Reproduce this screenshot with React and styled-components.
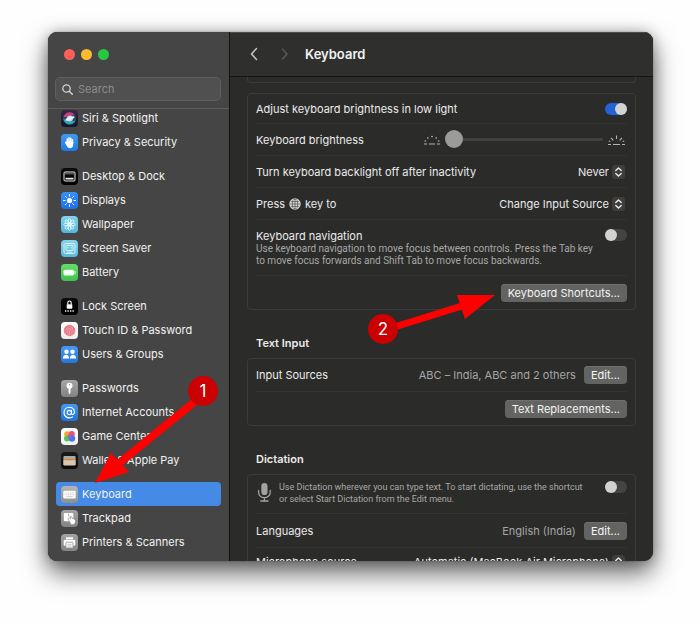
import React, { useState } from "react";
import styled, { createGlobalStyle } from "styled-components";

const GlobalStyle = createGlobalStyle`
  * {
    box-sizing: border-box;
  }
  body {
    margin: 0;
    background: #fefefe;
    color: #ececeb;
    font-family: Inter, "Liberation Sans", sans-serif;
    font-size: 11px;
    font-weight: 400;
    line-height: 14px;
  }
  h1, h2, p {
    margin: 0;
  }
  button, input, select {
    margin: 0;
    padding: 0;
    border: 0;
    font: inherit;
    color: inherit;
  }
`;

const Page = styled.main`
  height: 100vh;
  min-height: 300px;
  padding: 32px 47px 63px 48px;
`;

const Window = styled.div`
  position: relative;
  display: flex;
  height: 100%;
  border-radius: 9px;
  background: #2b2b2a;
  box-shadow: 0 0 1px rgba(0, 0, 0, 0.6), 0 0 14px rgba(0, 0, 0, 0.25),
    0 12px 26px rgba(0, 0, 0, 0.6);
`;

const Sidebar = styled.aside`
  display: flex;
  flex-direction: column;
  flex: 0 0 182px;
  border-right: 1px solid #121212;
  border-radius: 9px 0 0 9px;
  background: #454545;
  overflow: hidden;
`;

const TrafficLights = styled.div`
  display: flex;
  gap: 6px;
  padding: 17px 16px;
`;

const Light = styled.button`
  width: 11px;
  height: 11px;
  border-radius: 50%;
  background: ${({ $color }) => $color};
`;

const SearchBox = styled.label`
  display: flex;
  align-items: center;
  gap: 5px;
  height: 24px;
  margin: 0 8px 7px 7px;
  padding: 0 6px;
  border: 1px solid #5f5f5f;
  border-radius: 5px;
  background: #505050;
  svg {
    flex: none;
  }
  input {
    width: 100%;
    min-width: 0;
    background: none;
    outline: none;
    &::placeholder {
      color: #8c8c8c;
      opacity: 1;
    }
  }
`;

const MenuScroll = styled.nav`
  flex: 1;
  min-height: 0;
  border-top: 1px solid #5c5c5c;
  overflow: hidden;
`;

const MenuGroup = styled.ul`
  margin: -3px 8px 13px;
  padding: 0;
  list-style: none;
`;

const MenuItem = styled.a`
  display: flex;
  align-items: center;
  gap: 4px;
  height: 24px;
  padding: 0 5px;
  border-radius: 4px;
  background: ${({ $active }) => ($active ? "#448ae6" : "none")};
  color: #f2f2f2;
  text-decoration: none;
  white-space: nowrap;
  svg {
    flex: none;
  }
`;

const Pane = styled.section`
  display: flex;
  flex-direction: column;
  flex: 1;
  min-width: 0;
  border-radius: 0 9px 9px 0;
  overflow: hidden;
`;

const TitleBar = styled.header`
  display: flex;
  align-items: center;
  flex: 0 0 45px;
  padding: 0 18px 2px;
  border-top: 1px solid #4c4c4b;
  border-bottom: 1px solid #151514;
  background: #2f2f2e;
  h1 {
    font-size: 13px;
    font-weight: 600;
    line-height: 16px;
    color: #f2f2f2;
  }
`;

const NavButton = styled.button`
  width: 13px;
  height: 16px;
  margin-right: ${({ disabled }) => (disabled ? "14px" : "17px")};
  background: none;
  color: ${({ disabled }) => (disabled ? "#5a5a59" : "#c4c4c3")};
  svg {
    display: block;
  }
`;

const PaneScroll = styled.div`
  flex: 1;
  min-height: 0;
  padding: 0 17px;
  overflow: hidden;
`;

const CardTail = styled.div`
  height: 6px;
  margin-bottom: 10px;
  border: 1px solid #3b3b3a;
  border-top: 0;
  border-radius: 0 0 4px 4px;
`;

const Card = styled.div`
  padding: 0 8px;
  border: 1px solid #3b3b3a;
  border-radius: 4px;
  background: #2b2b2a;
`;

const rowHeights = {
  short: "29px",
  normal: "32px",
  tall: "34px",
};

const Row = styled.div`
  display: flex;
  align-items: center;
  justify-content: space-between;
  gap: 4px;
  min-height: ${({ $size = "normal" }) => rowHeights[$size]};
  white-space: nowrap;
  & + & {
    border-top: 1px solid #333332;
  }
`;

const TextRow = styled(Row)`
  align-items: flex-start;
  padding: ${({ $compact }) => ($compact ? "6px 0 8px" : "9px 0 8px")};
`;

const RowTitle = styled.label`
  display: flex;
  align-items: center;
  gap: 4px;
`;

const Note = styled.p`
  font-family: Roboto, Inter, sans-serif;
  font-size: ${({ $small }) => ($small ? "9px" : "10px")};
  line-height: 12px;
  color: #a8a8a7;
`;

const DictationInfo = styled.div`
  display: flex;
  gap: 6px;
  svg {
    flex: none;
  }
`;

const SectionTitle = styled.h2`
  padding: 26px 9px 8px;
  font-size: 11px;
  font-weight: 600;
  line-height: 14px;
`;

const Controls = styled.div`
  display: flex;
  align-items: center;
  gap: 8px;
`;

const Value = styled.span`
  color: #a6a6a5;
`;

const PushButton = styled.button`
  height: 18px;
  padding: 0 7px;
  border-radius: 4px;
  background: #636362;
  color: #f4f4f3;
  box-shadow: inset 0 1px 0 #6f6f6e;
`;

const Switch = styled.input`
  flex: none;
  width: 22px;
  height: 12px;
  border-radius: 6px;
  appearance: none;
  background: #444443;
  &::before {
    content: "";
    display: block;
    width: 12px;
    height: 12px;
    border-radius: 50%;
    background: #d2d2d1;
  }
  &:checked {
    background: #2562d6;
  }
  &:checked::before {
    margin-left: auto;
  }
`;

const Picker = styled.div`
  display: flex;
  align-items: center;
  gap: 3px;
  padding-right: 2px;
  select {
    appearance: none;
    background: transparent;
    text-align-last: right;
    outline: none;
  }
`;

const SliderBox = styled.div`
  display: flex;
  align-items: center;
  gap: 4px;
  flex: 0 0 204px;
  svg {
    flex: none;
  }
`;

const Slider = styled.input`
  flex: 1;
  min-width: 0;
  height: 18px;
  appearance: none;
  background: none;
  &::-webkit-slider-runnable-track {
    height: 3px;
    border-radius: 2px;
    background: #414140;
  }
  &::-webkit-slider-thumb {
    appearance: none;
    width: 18px;
    height: 18px;
    margin-top: -8px;
    border-radius: 50%;
    background: #9b9b9a;
  }
`;

const Arrows = styled.svg`
  position: absolute;
  top: 0;
  left: 0;
  pointer-events: none;
`;

const Badge = styled.span`
  position: absolute;
  top: ${({ $y }) => $y}px;
  left: ${({ $x }) => $x}px;
  width: 30px;
  height: 30px;
  border-radius: 50%;
  background: #cb0003;
  color: #fff;
  font-size: 17px;
  line-height: 30px;
  text-align: center;
`;

const tiles = {
  siri: {
    from: "#3b2547",
    to: "#101828",
    art: (
      <>
        <circle cx="8.5" cy="8.5" r="6.5" fill="#27496b" />
        <path d="M2.500 7C4 2 10 0.500 13.500 4.500 10.500 5 7 8 2.500 7Z" fill="#c73f78" />
        <path d="M2.500 9c1 6 9 7.500 12 1.500C11 12 7 11 2.500 9Z" fill="#2aa7b4" />
        <circle cx="9" cy="8.500" r="3" fill="#cfe0f0" opacity="0.900" />
        <ellipse cx="9" cy="8.500" rx="4.800" ry="1.600" fill="#e6f0f8" transform="rotate(-20 9 8.500)" />
      </>
    ),
  },
  hand: {
    from: "#3f9af5",
    to: "#1f78e8",
    art: (
      <g fill="none" stroke="#fff" strokeLinecap="round" strokeWidth="1.500">
        <path d="M6.300 8.500V5M8 8V3.700M9.800 8V4.200M11.500 9V5.700M4.600 8.300l1.500 2.500" />
        <path d="M6.200 8.300h5.300v1.500c0 5-4 4.500-5.300 1z" fill="#fff" />
      </g>
    ),
  },
  dock: {
    from: "#0b0b0b",
    to: "#000",
    art: (
      <>
        <rect x="3" y="4" width="11" height="9" rx="1" fill="none" stroke="#e8e8e8" />
        <path d="M4 5.800h9" stroke="#777" strokeWidth="1" />
        <rect x="4.500" y="9.800" width="8" height="1.700" fill="#e8e8e8" />
      </>
    ),
  },
  sun: {
    from: "#3793f8",
    to: "#1c72e8",
    art: (
      <>
        <circle cx="8.500" cy="8.500" r="2.600" fill="#fff" />
        <path
          d="M8.500 2.500v1.600M8.500 12.900v1.600M2.500 8.500h1.600M12.900 8.500h1.600M4.300 4.300l1.100 1.100M11.600 11.600l1.100 1.100M4.300 12.700l1.100-1.100M11.600 5.400l1.100-1.100"
          stroke="#fff"
          strokeLinecap="round"
        />
      </>
    ),
  },
  flower: {
    from: "#7fd3ee",
    to: "#56b5dc",
    art: (
      <g fill="none" stroke="#e9fafc" strokeWidth="0.900">
        {[0, 45, 90, 135, 180, 225, 270, 315].map((r) => (
          <ellipse key={r} cx="8.500" cy="5.300" rx="1.400" ry="2.500" transform={`rotate(${r} 8.500 8.500)`} />
        ))}
      </g>
    ),
  },
  saver: {
    from: "#86d6ee",
    to: "#58b6dd",
    art: (
      <g fill="none" stroke="#e3f7fb" strokeWidth="0.900">
        <rect x="3" y="3.500" width="11" height="10" rx="1.500" />
        <rect x="5" y="5.500" width="7" height="5" rx="0.500" />
        <path d="M7 7v1.500M10 7v1.500M5.500 12.200h6" />
      </g>
    ),
  },
  battery: {
    from: "#65dc6c",
    to: "#3fc24d",
    art: (
      <>
        <rect x="2.500" y="5.700" width="10.500" height="5.800" rx="1.600" fill="#f3fff3" />
        <path d="M14 7.500v2.200" stroke="#f3fff3" strokeLinecap="round" />
      </>
    ),
  },
  lock: {
    from: "#0b0b0b",
    to: "#000",
    art: (
      <>
        <rect x="5.700" y="6.300" width="5.600" height="4.400" rx="0.700" fill="#fff" />
        <path d="M6.800 6.500V4.700a1.700 1.700 0 0 1 3.400 0v1.800" fill="none" stroke="#fff" strokeWidth="1.100" />
        <path d="M4 13h9" stroke="#fff" strokeWidth="1.300" strokeDasharray="1.300 1.200" />
      </>
    ),
  },
  finger: {
    from: "#fff",
    to: "#ececec",
    art: (
      <>
        <circle cx="8.500" cy="8.500" r="5.800" fill="#f0a3ab" />
        <g fill="none" stroke="#e0596b" strokeWidth="0.800">
          <path d="M4 10.500C3 5 7 3 10 4s3.500 4.500 2.700 8" />
          <path d="M5.500 12.500C4.500 8 6 5.500 8.500 5.600s2.900 3 2.400 7.600" />
          <path d="M7.300 13.500C6.700 10 6.700 7.700 8.200 7.700s1.300 2.500 1 6.300M4 6.500l3-3M13.500 7.500l-1-2" />
        </g>
      </>
    ),
  },
  users: {
    from: "#459bf3",
    to: "#2377e1",
    art: (
      <g fill="#fff">
        <circle cx="5.500" cy="5.800" r="2.200" />
        <circle cx="11.500" cy="5.800" r="2.200" />
        <path d="M1.800 12.600c0-5.300 6.400-5.300 6.400 0zM8.800 12.600c0-5.300 6.400-5.300 6.400 0z" />
      </g>
    ),
  },
  key: {
    from: "#a6a6a6",
    to: "#828282",
    art: (
      <>
        <circle cx="8.500" cy="5.700" r="3" fill="#fff" />
        <path d="M7.600 8h1.900v5l-1 1.200-.9-1z" fill="#fff" />
        <circle cx="8.500" cy="4.700" r="0.700" fill="#8d8d8d" />
      </>
    ),
  },
  at: {
    from: "#439bf2",
    to: "#1d74df",
    art: (
      <g fill="none" stroke="#fff" strokeWidth="1.100" strokeLinecap="round">
        <circle cx="8.300" cy="8.500" r="2.100" />
        <path d="M10.500 6.300v3c0 2 3 1.600 3-1.200 0-6.600-10.500-6.300-10.500.5 0 5 5 6.300 8.500 4.300" />
      </g>
    ),
  },
  game: {
    from: "#fff",
    to: "#f0f0f0",
    art: (
      <>
        <circle cx="6.200" cy="6.200" r="3" fill="#f5a623" />
        <circle cx="10.800" cy="6" r="3" fill="#ef4f77" />
        <circle cx="6" cy="10.600" r="3" fill="#50c853" />
        <circle cx="11" cy="10.500" r="3.200" fill="#4a78ea" />
        <circle cx="8.600" cy="8.500" r="2" fill="#a25bd8" />
      </>
    ),
  },
  wallet: {
    from: "#1a1a1a",
    to: "#0b0b0b",
    art: (
      <>
        <rect x="2.500" y="4" width="12" height="9.500" rx="1" fill="#d6cdbd" />
        <path d="M3 5h11" stroke="#5f8fa8" />
        <path d="M3 6.500h11" stroke="#d7a349" />
        <path d="M3 7.800h11" stroke="#c85f4b" />
        <path d="M2.500 8.200h3.700c.8 2 3.700 2 4.500 0h3.800v4.800h-12z" fill="#d9c5ac" />
      </>
    ),
  },
  keyboard: {
    from: "#b5b5b5",
    to: "#8f8f8f",
    art: (
      <>
        <rect x="2.300" y="4.800" width="12.400" height="7.700" rx="1.300" fill="#fff" />
        <path d="M3.700 7h9.600M3.700 8.700h9.600" stroke="#b5b5b5" strokeWidth="0.700" strokeDasharray="1 0.700" />
        <path d="M5.300 10.700h6.400" stroke="#b5b5b5" strokeWidth="0.700" />
      </>
    ),
  },
  trackpad: {
    from: "#a4a4a4",
    to: "#838383",
    art: (
      <>
        <rect x="2.800" y="3" width="9.500" height="8.300" rx="1.300" fill="#fff" />
        <path d="M7.300 3.800l.8 2.800" stroke="#a0a0a0" strokeWidth="0.900" />
        <path d="M6.800 8.500l1.500-.6 1.200 1V6.500l1.400.2.300 1.800 2 .4 1.200 1.600-.2 2.500-1.400 1.500H10z" fill="#fff" stroke="#8f8f8f" strokeWidth="0.700" />
      </>
    ),
  },
  printer: {
    from: "#a4a4a4",
    to: "#838383",
    art: (
      <>
        <path d="M5 3.300h7v2H5z" fill="#fff" />
        <rect x="2.700" y="5.800" width="11.600" height="6" rx="1.300" fill="#fff" />
        <rect x="5" y="8.200" width="7" height="5.700" rx="0.500" fill="#fff" stroke="#8f8f8f" strokeWidth="0.800" />
        <path d="M6.500 10.300h4M6.500 12h4" stroke="#a8a8a8" strokeWidth="0.700" />
      </>
    ),
  },
};

const menu = [
  [
    ["siri", "Siri & Spotlight"],
    ["hand", "Privacy & Security"],
  ],
  [
    ["dock", "Desktop & Dock"],
    ["sun", "Displays"],
    ["flower", "Wallpaper"],
    ["saver", "Screen Saver"],
    ["battery", "Battery"],
  ],
  [
    ["lock", "Lock Screen"],
    ["finger", "Touch ID & Password"],
    ["users", "Users & Groups"],
  ],
  [
    ["key", "Passwords"],
    ["at", "Internet Accounts"],
    ["game", "Game Center"],
    ["wallet", "Wallet & Apple Pay"],
  ],
  [
    ["keyboard", "Keyboard"],
    ["trackpad", "Trackpad"],
    ["printer", "Printers & Scanners"],
  ],
];

const Tile = ({ name }) => {
  const { from, to, art } = tiles[name];
  return (
    <svg width="17" height="17" viewBox="0 0 17 17" aria-hidden="true">
      <defs>
        <linearGradient id={`tile-${name}`} x1="0" y1="0" x2="0" y2="1">
          <stop offset="0" stopColor={from} />
          <stop offset="1" stopColor={to} />
        </linearGradient>
      </defs>
      <rect width="17" height="17" rx="4" fill={`url(#tile-${name})`} />
      {art}
    </svg>
  );
};

const Stepper = () => (
  <svg width="13" height="14" viewBox="0 0 13 14" aria-hidden="true">
    <rect width="13" height="14" rx="3.500" fill="#3e3e3d" />
    <path
      d="M3.800 5.400L6.500 2.900l2.700 2.500M3.800 8.600l2.700 2.500 2.700-2.500"
      fill="none"
      stroke="#ededec"
      strokeWidth="1.400"
      strokeLinecap="round"
      strokeLinejoin="round"
    />
  </svg>
);

const Globe = () => (
  <svg width="12" height="12" viewBox="0 0 12 12" aria-hidden="true">
    <circle cx="6" cy="6" r="5.700" fill="#dededd" />
    <g fill="none" stroke="#4a4a49" strokeWidth="0.700">
      <ellipse cx="6" cy="6" rx="2.700" ry="5" />
      <path d="M6 1v10M1 6h10M1.800 3.600h8.400M1.800 8.400h8.400" />
    </g>
  </svg>
);

const Mic = () => (
  <svg width="17" height="22" viewBox="0 0 17 22" aria-hidden="true">
    <rect x="5.300" y="2" width="6.200" height="12" rx="3.100" fill="#a2a2a1" />
    <path
      d="M2.600 9.500v1.700c0 7.300 11.600 7.300 11.600 0V9.500M8.400 16.700v3M4.700 20h7.400"
      fill="none"
      stroke="#a2a2a1"
      strokeWidth="1.300"
      strokeLinecap="round"
    />
  </svg>
);

const DimKeys = () => (
  <svg width="18" height="12" viewBox="0 0 18 12" aria-hidden="true">
    <path d="M1 10h3M6 10h6M14 10h3" stroke="#b4b4b3" strokeWidth="1.100" />
    <g fill="#c4c4c3">
      <circle cx="9" cy="2.500" r="0.800" />
      <circle cx="4.800" cy="4" r="0.800" />
      <circle cx="13.200" cy="4" r="0.800" />
      <circle cx="2.300" cy="7" r="0.700" />
      <circle cx="15.700" cy="7" r="0.700" />
    </g>
  </svg>
);

const BrightKeys = () => (
  <svg width="20" height="12" viewBox="0 0 20 12" aria-hidden="true">
    <path
      d="M1 10.500h3M6 10.500h7M15 10.500h3M9.500 1.500v3.500M4 3.800l2.300 2.500M15 3.800l-2.300 2.500M1.800 7l1.500.600M17.200 7l-1.500.600"
      fill="none"
      stroke="#b4b4b3"
      strokeWidth="1.100"
    />
  </svg>
);

const Chevron = ({ d }) => (
  <svg width="13" height="16" viewBox="0 0 13 16" aria-hidden="true">
    <path d={d} fill="none" stroke="currentColor" strokeWidth="1.500" strokeLinecap="round" strokeLinejoin="round" />
  </svg>
);

const App = () => {
  const [active, setActive] = useState("keyboard");
  const [level, setLevel] = useState(0);

  return (
    <Page>
      <GlobalStyle />
      <Window>
        <Sidebar>
          <TrafficLights>
            <Light $color="#fb5f57" aria-label="Close" />
            <Light $color="#fcbb2e" aria-label="Minimise" />
            <Light $color="#2ac740" aria-label="Zoom" />
          </TrafficLights>
          <SearchBox>
            <svg width="11" height="11" viewBox="0 0 11 11" aria-hidden="true">
              <circle cx="4.500" cy="4.500" r="3.700" fill="none" stroke="#d0d0d0" strokeWidth="1.300" />
              <path d="M7.300 7.300l3 3" stroke="#d0d0d0" strokeWidth="1.500" strokeLinecap="round" />
            </svg>
            <input type="text" placeholder="Search" aria-label="Search" />
          </SearchBox>
          <MenuScroll>
            {menu.map((group) => (
              <MenuGroup key={group[0][0]}>
                {group.map(([icon, label]) => (
                  <li key={icon}>
                    <MenuItem
                      href={`#${icon}`}
                      $active={active === icon}
                      onClick={() => setActive(icon)}
                    >
                      <Tile name={icon} />
                      {label}
                    </MenuItem>
                  </li>
                ))}
              </MenuGroup>
            ))}
          </MenuScroll>
        </Sidebar>
        <Pane>
          <TitleBar>
            <NavButton aria-label="Back">
              <Chevron d="M8.500 2.500L3.500 8l5 5.500" />
            </NavButton>
            <NavButton aria-label="Forward" disabled>
              <Chevron d="M4.500 3l4.500 5-4.500 5" />
            </NavButton>
            <h1>Keyboard</h1>
          </TitleBar>
          <PaneScroll>
            <CardTail />
            <Card>
              <Row $size="short">
                <RowTitle htmlFor="low-light">
                  Adjust keyboard brightness in low light
                </RowTitle>
                <Switch id="low-light" type="checkbox" defaultChecked />
              </Row>
              <Row>
                <RowTitle htmlFor="brightness">Keyboard brightness</RowTitle>
                <SliderBox>
                  <DimKeys />
                  <Slider
                    id="brightness"
                    type="range"
                    value={level}
                    onChange={(e) => setLevel(e.target.value)}
                  />
                  <BrightKeys />
                </SliderBox>
              </Row>
              <Row>
                <RowTitle htmlFor="backlight">
                  Turn keyboard backlight off after inactivity
                </RowTitle>
                <Picker>
                  <select id="backlight">
                    <option>Never</option>
                  </select>
                  <Stepper />
                </Picker>
              </Row>
              <Row>
                <RowTitle htmlFor="globe-key">
                  Press <Globe /> key to
                </RowTitle>
                <Picker>
                  <select id="globe-key">
                    <option>Change Input Source</option>
                  </select>
                  <Stepper />
                </Picker>
              </Row>
              <TextRow>
                <div>
                  <RowTitle htmlFor="navigation">Keyboard navigation</RowTitle>
                  <Note>
                    Use keyboard navigation to move focus between controls. Press the Tab key
                    <br />
                    to move focus forwards and Shift Tab to move focus backwards.
                  </Note>
                </div>
                <Switch id="navigation" type="checkbox" />
              </TextRow>
              <Row $size="tall">
                <span />
                <PushButton>Keyboard Shortcuts...</PushButton>
              </Row>
            </Card>
            <SectionTitle>Text Input</SectionTitle>
            <Card>
              <Row>
                <span>Input Sources</span>
                <Controls>
                  <Value>ABC – India, ABC and 2 others</Value>
                  <PushButton>Edit...</PushButton>
                </Controls>
              </Row>
              <Row $size="tall">
                <span />
                <PushButton>Text Replacements...</PushButton>
              </Row>
            </Card>
            <SectionTitle>Dictation</SectionTitle>
            <Card>
              <TextRow $compact>
                <DictationInfo>
                  <Mic />
                  <Note as="label" $small htmlFor="dictation">
                    Use Dictation wherever you can type text. To start dictating, use the shortcut
                    <br />
                    or select Start Dictation from the Edit menu.
                  </Note>
                </DictationInfo>
                <Switch id="dictation" type="checkbox" />
              </TextRow>
              <Row $size="tall">
                <span>Languages</span>
                <Controls>
                  <Value>English (India)</Value>
                  <PushButton>Edit...</PushButton>
                </Controls>
              </Row>
              <Row $size="short">
                <RowTitle htmlFor="mic-source">Microphone source</RowTitle>
                <Picker>
                  <select id="mic-source">
                    <option>Automatic (MacBook Air Microphone)</option>
                  </select>
                  <Stepper />
                </Picker>
              </Row>
            </Card>
          </PaneScroll>
        </Pane>
        <Arrows width="460" height="470" viewBox="48 32 460 470" aria-hidden="true">
          <g fill="none" stroke="#fe0000" strokeWidth="8">
            <path d="M203 395L117 465" />
            <path d="M388 329L462 306" strokeWidth="7" />
          </g>
          <path d="M95 483l16-30 18 19zM495 295l-38 0 8 24z" fill="#fe0000" />
        </Arrows>
        <Badge $x={140} $y={344}>1</Badge>
        <Badge $x={320} $y={282}>2</Badge>
      </Window>
    </Page>
  );
};

export default App;
